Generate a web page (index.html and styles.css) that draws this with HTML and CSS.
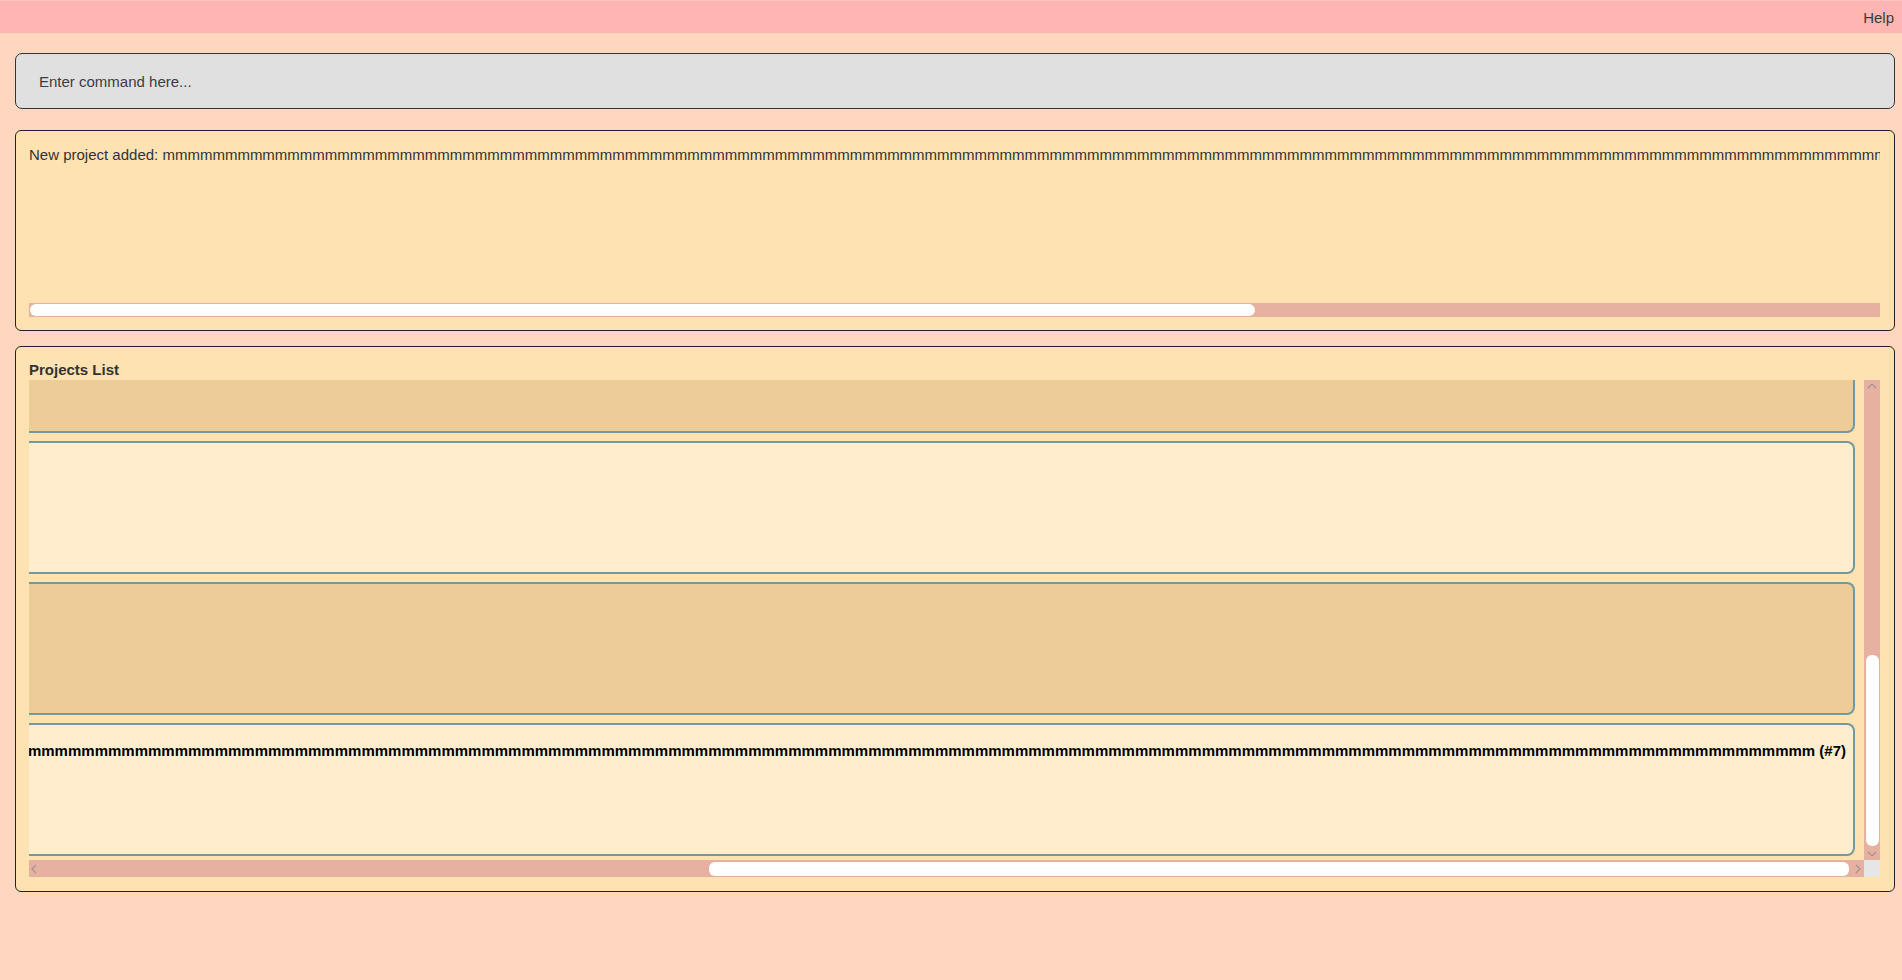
FILE: index.html
```html
<!DOCTYPE html>
<html lang="en">
<head>
<meta charset="utf-8">
<title>Project Book</title>
<link rel="stylesheet" href="styles.css">
</head>
<body>
<div class="menubar"><span class="menu-item">Help</span></div>
<div class="main">
  <div class="command-box">
    <input class="command-input" type="text" placeholder="Enter command here...">
  </div>
  <div class="result-box">
    <div class="result-text">New project added: mmmmmmmmmmmmmmmmmmmmmmmmmmmmmmmmmmmmmmmmmmmmmmmmmmmmmmmmmmmmmmmmmmmmmmmmmmmmmmmmmmmmmmmmmmmmmmmmmmmmmmmmmmmmmmmmmmmmmmmmmmmmmmmmmmmmmmmmmmmmmmmmmmmmmmmmmmmmmmmmmmmmmmmmmmmmmmmmmmmmmmmmmmmmmmmmmm</div>
    <div class="hbar hbar-plain">
      <div class="hbar-thumb hbar-thumb-result"></div>
    </div>
  </div>
  <div class="projects-box">
    <div class="projects-title">Projects List</div>
    <div class="list-frame">
      <div class="viewport">
        <div class="cards">
          <div class="card card-odd"><div class="card-name"><span>mmmm (#4)</span></div></div>
          <div class="card card-even"><div class="card-name"><span>mmmm (#5)</span></div></div>
          <div class="card card-odd"><div class="card-name"><span>mmmm (#6)</span></div></div>
          <div class="card card-even"><div class="card-name"><span>mmmmmmmmmmmmmmmmmmmmmmmmmmmmmmmmmmmmmmmmmmmmmmmmmmmmmmmmmmmmmmmmmmmmmmmmmmmmmmmmmmmmmmmmmmmmmmmmmmmmmmmmmmmmmmmmmmmmmmmmmmmmmmmmmmmmmmmmmmmmmmmmmmmmmmmmmmmmmmmmmmmmmmmmmmmmmmmmmmmmmmmmmmmmmm (#7)</span></div></div>
        </div>
      </div>
      <div class="vbar">
        <svg class="arrow arrow-up" width="10" height="6" viewBox="0 0 10 6"><path d="M1 5 L5 1 L9 5" fill="none" stroke="#a8918c" stroke-width="1.2"/></svg>
        <div class="vbar-thumb"></div>
        <svg class="arrow arrow-down" width="10" height="6" viewBox="0 0 10 6"><path d="M1 1 L5 5 L9 1" fill="none" stroke="#a8918c" stroke-width="1.2"/></svg>
      </div>
      <div class="hbar hbar-list">
        <svg class="arrow arrow-left" width="6" height="10" viewBox="0 0 6 10"><path d="M5 1 L1 5 L5 9" fill="none" stroke="#a8918c" stroke-width="1.2"/></svg>
        <div class="hbar-thumb hbar-thumb-list"></div>
        <svg class="arrow arrow-right" width="6" height="10" viewBox="0 0 6 10"><path d="M1 1 L5 5 L1 9" fill="none" stroke="#a8918c" stroke-width="1.2"/></svg>
      </div>
      <div class="corner"></div>
    </div>
  </div>
</div>
</body>
</html>
```

FILE: styles.css
```css
* { box-sizing: border-box; }

html, body {
  margin: 0;
  padding: 0;
}

body {
  width: 1902px;
  height: 980px;
  background: #ffd6bf;
  font-family: "Liberation Sans", Arial, sans-serif;
  font-size: 15px;
  color: #333333;
  overflow: hidden;
}

.menubar {
  height: 33px;
  background: #ffb6b3;
  border-top: 1px solid #ffc2c0;
  display: flex;
  justify-content: flex-end;
  align-items: center;
  padding-right: 8px;
}

.menu-item {
  line-height: 20px;
  color: #3a3a3a;
  margin-top: 1px;
}

.main {
  padding: 20px 7px 0 15px;
  display: flex;
  flex-direction: column;
}

.command-box {
  height: 56px;
  background: #e0e0e0;
  border: 1px solid #333333;
  border-radius: 7px;
  display: flex;
  align-items: center;
  margin-bottom: 21px;
}

.command-input {
  width: 100%;
  border: none;
  background: transparent;
  outline: none;
  font-family: "Liberation Sans", Arial, sans-serif;
  font-size: 15px;
  padding: 0 0 0 23px;
  color: #333333;
  margin-top: 1px;
}

.command-input::placeholder {
  color: #3d3d3d;
  opacity: 1;
}

.result-box {
  height: 201px;
  background: #ffe2b2;
  border: 1px solid #222222;
  border-radius: 6px;
  padding: 14px 14px 13px 13px;
  display: flex;
  flex-direction: column;
  justify-content: space-between;
  margin-bottom: 15px;
}

.result-text {
  line-height: 20px;
  white-space: nowrap;
  overflow: hidden;
  color: #333333;
}

.hbar {
  position: relative;
  background: #e7b1a1;
}

.hbar-plain {
  height: 14px;
  width: 1851px;
}

.hbar-thumb {
  position: absolute;
  background: #ffffff;
  border-radius: 6px;
}

.hbar-thumb-result {
  left: 1px;
  top: 1px;
  bottom: 1px;
  width: 1225px;
}

.projects-box {
  height: 546px;
  background: #ffe2b2;
  border: 1px solid #222222;
  border-radius: 6px;
  padding: 13px 14px 14px 13px;
}

.projects-title {
  font-weight: bold;
  line-height: 20px;
  color: #333333;
}

.list-frame {
  display: grid;
  grid-template-columns: 1fr 16px;
  grid-template-rows: 480px 17px;
}

.viewport {
  overflow: hidden;
}

.cards {
  margin-top: -80px;
  display: flex;
  flex-direction: column;
  gap: 8px;
  width: 1826px;
}

.card {
  height: 133px;
  border: 2px solid #72999b;
  border-left: none;
  border-radius: 0 8px 8px 0;
  overflow: hidden;
  padding: 16px 7px 0 0;
}

.card-odd { background: #edcc98; }
.card-even { background: #ffedce; }

.card-name {
  display: flex;
  justify-content: flex-end;
  white-space: nowrap;
  font-weight: bold;
  line-height: 20px;
  color: #000000;
}

.card-odd .card-name,
.card-even:nth-child(2) .card-name {
  visibility: hidden;
}

.vbar {
  position: relative;
  background: #e7b1a1;
}

.vbar-thumb {
  position: absolute;
  left: 2px;
  width: 13px;
  top: 275px;
  height: 191px;
  background: #ffffff;
  border-radius: 6px;
}

.arrow {
  position: absolute;
  display: block;
}

.arrow-up { left: 3px; top: 3px; }
.arrow-down { left: 3px; bottom: 3px; }

.hbar-list {
  height: 17px;
}

.hbar-thumb-list {
  left: 680px;
  top: 2px;
  height: 14px;
  width: 1140px;
}

.arrow-left { left: 2px; top: 4px; }
.arrow-right { right: 3px; top: 4px; }

.corner {
  background: #e6e6e6;
}
```
